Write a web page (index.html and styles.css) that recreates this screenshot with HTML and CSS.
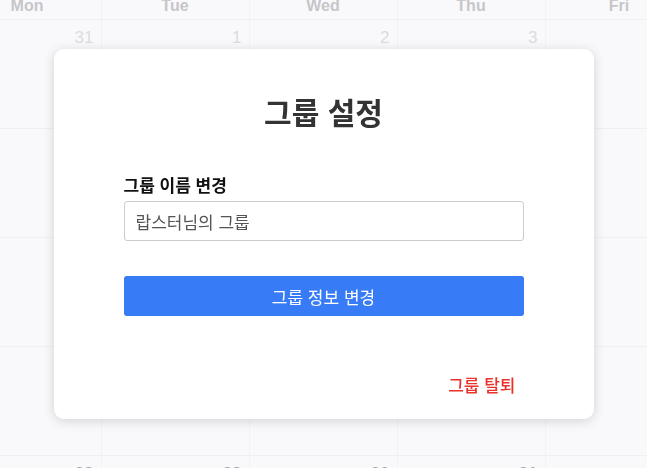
FILE: index.html
```html
<!DOCTYPE html>
<html lang="ko">
<head>
<meta charset="utf-8">
<title>그룹 설정</title>
<link rel="stylesheet" href="styles.css">
</head>
<body>
<div class="calendar-wrap">
  <div class="calendar">
    <div class="head-row">
      <div class="head-cell">Sun</div>
      <div class="head-cell">Mon</div>
      <div class="head-cell">Tue</div>
      <div class="head-cell">Wed</div>
      <div class="head-cell">Thu</div>
      <div class="head-cell">Fri</div>
      <div class="head-cell">Sat</div>
    </div>
    <div class="week">
      <div class="day">30</div><div class="day">31</div><div class="day">1</div><div class="day">2</div><div class="day">3</div><div class="day">4</div><div class="day">5</div>
    </div>
    <div class="week">
      <div class="day">6</div><div class="day">7</div><div class="day">8</div><div class="day">9</div><div class="day">10</div><div class="day">11</div><div class="day">12</div>
    </div>
    <div class="week">
      <div class="day">13</div><div class="day">14</div><div class="day">15</div><div class="day">16</div><div class="day">17</div><div class="day">18</div><div class="day">19</div>
    </div>
    <div class="week">
      <div class="day">20</div><div class="day">21</div><div class="day">22</div><div class="day">23</div><div class="day">24</div><div class="day">25</div><div class="day">26</div>
    </div>
    <div class="week week-dark">
      <div class="day">27</div><div class="day">28</div><div class="day">29</div><div class="day">30</div><div class="day">31</div><div class="day">1</div><div class="day">2</div>
    </div>
  </div>
</div>

<div class="overlay">
  <div class="modal">
    <h1 class="modal-title">그룹 설정</h1>
    <label class="field-label" for="gname">그룹 이름 변경</label>
    <input id="gname" class="field-input" type="text" value="랍스터님의 그룹">
    <button class="primary-btn" type="button">그룹 정보 변경</button>
    <div class="leave-row">
      <button class="leave-btn" type="button">그룹 탈퇴</button>
    </div>
  </div>
</div>
</body>
</html>
```

FILE: styles.css
```css
html, body {
  margin: 0;
  padding: 0;
  height: 100%;
}
body {
  background: #f9f9fb;
  font-family: "Noto Sans CJK KR", "Noto Sans", sans-serif;
  overflow: hidden;
}

.calendar-wrap {
  display: flex;
  justify-content: center;
  margin-top: -7px;
}
.calendar {
  flex: 0 0 1036px;
  width: 1036px;
  font-family: "Liberation Sans", Arial, sans-serif;
}
.head-row, .week {
  display: grid;
  grid-template-columns: repeat(7, 148px);
}
.head-row {
  height: 26px;
  border-bottom: 1px solid #f0f0f2;
}
.head-cell {
  border-right: 1px solid #f2f2f4;
  text-align: center;
  font-weight: bold;
  font-size: 16px;
  line-height: 26px;
  color: #c6c6ca;
}
.week {
  height: 108px;
  border-bottom: 1px solid #f0f0f2;
}
.day {
  border-right: 1px solid #f2f2f4;
  text-align: right;
  padding: 8px 7px 0 0;
  font-size: 17px;
  line-height: 20px;
  color: #dcdcde;
}
.week-dark .day {
  color: #a8a8ae;
  font-weight: bold;
}

.overlay {
  position: fixed;
  inset: 0;
  display: flex;
  align-items: center;
  justify-content: center;
}
.modal {
  width: 540px;
  height: 370px;
  box-sizing: border-box;
  background: #fff;
  border-radius: 10px;
  box-shadow: 0 2px 12px rgba(0, 0, 0, 0.16);
  padding: 42px 70px 23px;
  display: flex;
  flex-direction: column;
}
.modal-title {
  margin: 0 0 43px;
  text-align: center;
  font-size: 30px;
  line-height: 40px;
  font-weight: bold;
  color: #333;
}
.field-label {
  font-size: 17px;
  line-height: 22px;
  font-weight: bold;
  color: #111;
  margin-bottom: 5px;
}
.field-input {
  height: 40px;
  box-sizing: border-box;
  border: 1px solid #cccccc;
  border-radius: 3px;
  padding: 0 11px;
  font-family: inherit;
  font-size: 17px;
  color: #555;
  outline: none;
  margin: 0 0 35px;
}
.primary-btn {
  height: 40px;
  border: none;
  border-radius: 3px;
  background: #387bf6;
  color: #fff;
  font-family: inherit;
  font-size: 17px;
  padding: 0;
  margin: 0 0 58px;
}
.leave-row {
  display: flex;
  justify-content: flex-end;
  padding-right: 8px;
}
.leave-btn {
  border: none;
  background: none;
  padding: 0;
  font-family: inherit;
  font-size: 17px;
  line-height: 22px;
  font-weight: 500;
  color: #e8322b;
}
```
